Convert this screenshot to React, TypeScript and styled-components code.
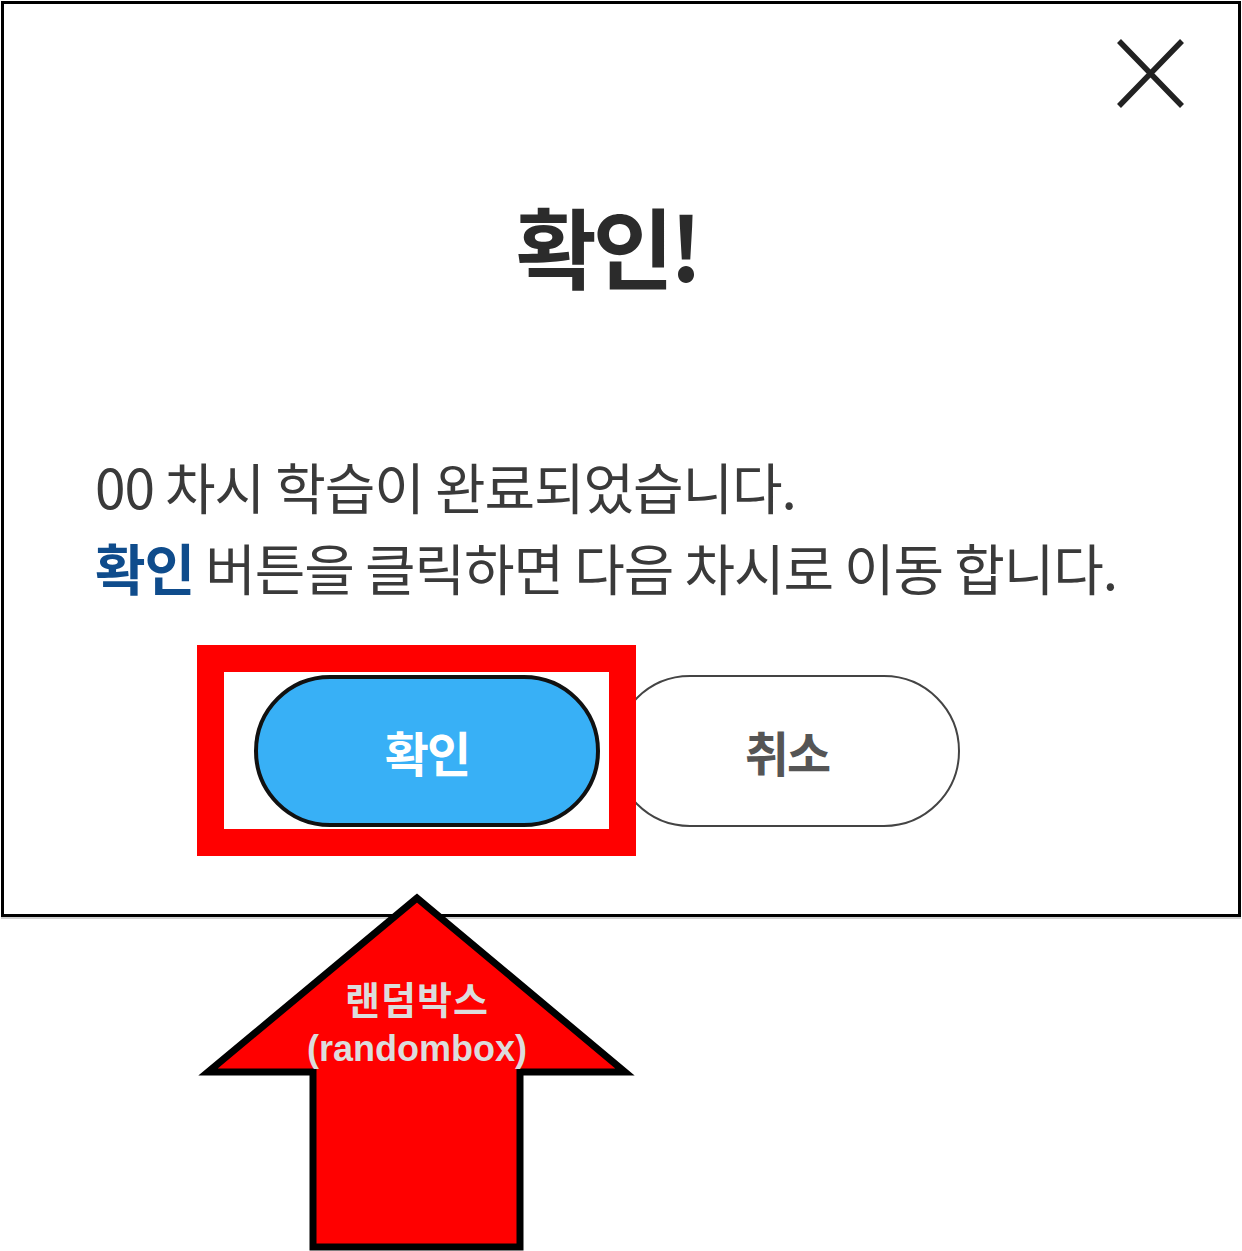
import React from 'react';
import styled, { createGlobalStyle } from 'styled-components';

const GlobalStyle = createGlobalStyle`
  html, body {
    margin: 0;
    padding: 0;
    background: #ffffff;
  }
  body {
    font-family: 'Noto Sans CJK KR', 'Noto Sans', sans-serif;
  }
`;

const Page = styled.div`
  position: relative;
  width: 1242px;
  height: 1251px;
  overflow: hidden;
  background: #ffffff;
`;

const Dialog = styled.div`
  box-sizing: border-box;
  margin: 1px 0 0 1px;
  width: 1240px;
  height: 916px;
  border: 3px solid #000;
  box-shadow: 0 2px 0 #cfcfcf;
  display: flex;
  flex-direction: column;
`;

const Header = styled.div`
  display: flex;
  justify-content: flex-end;
  padding: 33px 52px 0 0;
`;

const CloseButton = styled.button`
  border: 0;
  padding: 0;
  background: transparent;
  width: 70px;
  height: 72px;
  cursor: pointer;
  line-height: 0;
`;

const Title = styled.h1`
  margin: 85px 28px 0 0;
  text-align: center;
  font-size: 88px;
  line-height: 100px;
  font-weight: 700;
  letter-spacing: -4px;
  color: #2b2b2b;
`;

const Message = styled.div`
  margin: 151px 0 0 0;
  padding-left: 91px;
  font-size: 55px;
  line-height: 81px;
  letter-spacing: -1.1px;
  color: #3a3a3a;
  font-weight: 400;
`;

const Line = styled.p`
  margin: 0;
  white-space: nowrap;
`;

const Emphasis = styled.strong`
  color: #0f4c8c;
  font-weight: 700;
`;

const Buttons = styled.div`
  display: flex;
  justify-content: center;
  gap: 14px;
  margin: 68px 28px 0 0;
`;

const Highlight = styled.div`
  position: relative;

  &::after {
    content: '';
    position: absolute;
    top: -30px;
    left: -57px;
    right: -36px;
    bottom: -29px;
    border: 27px solid #ff0000;
    pointer-events: none;
    z-index: 2;
  }
`;

const PillButton = styled.button<{ $primary?: boolean }>`
  box-sizing: border-box;
  width: 346px;
  height: 152px;
  border-radius: 76px;
  border: ${p => (p.$primary ? '4px solid #111' : '2px solid #444')};
  background: ${p => (p.$primary ? '#38b0f6' : '#ffffff')};
  color: ${p => (p.$primary ? '#ffffff' : '#555555')};
  font-family: 'Noto Sans CJK KR', sans-serif;
  font-size: 48px;
  font-weight: 700;
  letter-spacing: -2px;
  cursor: pointer;
`;

const Arrow = styled.div`
  position: absolute;
  left: 197px;
  top: 890px;
  width: 440px;
  height: 370px;
`;

const ArrowLabel = styled.div`
  position: absolute;
  left: 0;
  right: 0;
  top: 88px;
  text-align: center;
  color: #dcdcdc;
  font-family: 'Liberation Sans', 'Noto Sans CJK KR', sans-serif;
  font-weight: 700;
  font-size: 36px;
  line-height: 47px;
`;

const LabelKo = styled.span`
  font-size: 38px;
  letter-spacing: 1px;
`;

function CloseIcon() {
  return (
    <svg width='70' height='72' viewBox='0 0 70 72'>
      <path
        d='M3 4 L66 69 M66 4 L3 69'
        stroke='#222'
        strokeWidth='5.5'
        fill='none'
      />
    </svg>
  );
}

export default function App() {
  return (
    <Page>
      <GlobalStyle />
      <Dialog>
        <Header>
          <CloseButton type='button' aria-label='닫기'>
            <CloseIcon />
          </CloseButton>
        </Header>

        <Title>확인!</Title>

        <Message>
          <Line>00 차시 학습이 완료되었습니다.</Line>
          <Line>
            <Emphasis>확인</Emphasis> 버튼을 클릭하면 다음 차시로 이동 합니다.
          </Line>
        </Message>

        <Buttons>
          <Highlight>
            <PillButton type='button' $primary>
              확인
            </PillButton>
          </Highlight>
          <PillButton type='button'>취소</PillButton>
        </Buttons>
      </Dialog>

      {/* annotation arrow pointing at the highlighted button */}
      <Arrow>
        <svg width='440' height='370' viewBox='0 0 440 370'>
          <polygon
            points='220,8 11,182 116,182 116,357 323,357 323,182 428,182'
            fill='#ff0000'
            stroke='#000'
            strokeWidth='7'
            strokeLinejoin='miter'
          />
        </svg>
        <ArrowLabel>
          <LabelKo>랜덤박스</LabelKo>
          <br />
          (randombox)
        </ArrowLabel>
      </Arrow>
    </Page>
  );
}
